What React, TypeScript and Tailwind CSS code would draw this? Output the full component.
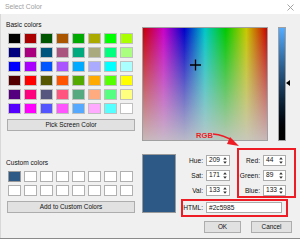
import React from "react";

// Qt basic colours, laid out column-major in a 6 x 8 grid
const basicColors: string[] = [];
for (let g = 0; g < 4; g++)
  for (let r = 0; r < 4; r++)
    for (let b = 0; b < 3; b++)
      basicColors.push(
        `rgb(${Math.floor((r * 255) / 3)},${Math.floor((g * 255) / 3)},${Math.floor((b * 255) / 2)})`
      );

const customColors = ["#2c5985", ...Array(15).fill("#ffffff")];

const Swatch = ({ color, border = "border-[#c0c0c0]" }: { color: string; border?: string }) => (
  <div className={`h-[11px] w-[13px] border ${border}`} style={{ backgroundColor: color }} />
);

const SpinBox = ({ value, width }: { value: string; width: string }) => (
  <div className={`flex h-[11px] items-center border border-[#acacac] bg-white ${width}`}>
    <span className="flex-1 pl-[2px] leading-none">{value}</span>
    <svg width="6" height="9" viewBox="0 0 6 9" className="mr-[1px]">
      <path d="M1.2 3.6 L3 1.2 L4.8 3.6 Z" fill="#333" />
      <path d="M1.2 5.4 L3 7.8 L4.8 5.4 Z" fill="#333" />
    </svg>
  </div>
);

const Button = ({ label, width }: { label: string; width: string }) => (
  <div
    className={`flex h-[12px] items-center justify-center border border-[#adadad] bg-[#e1e1e1] text-[6.4px] ${width}`}
  >
    {label}
  </div>
);

const Field = ({ label, value }: { label: string; value: string }) => (
  <>
    <span className="w-[28px] pr-[1px] text-right">{label}</span>
    <div className="ml-[2px]">
      <SpinBox value={value} width="w-[24px]" />
    </div>
  </>
);

const Spectrum = () => (
  <div className="h-[114px] w-[126px] border border-[#a0a0a0]">
    <svg width="124" height="112" className="block">
      <defs>
        <linearGradient id="hue" x1="0" x2="1" y1="0" y2="0">
          <stop offset="0" stopColor="#c80000" />
          <stop offset="0.1667" stopColor="#c800c8" />
          <stop offset="0.3333" stopColor="#0000c8" />
          <stop offset="0.5" stopColor="#00c8c8" />
          <stop offset="0.6667" stopColor="#00c800" />
          <stop offset="0.8333" stopColor="#c8c800" />
          <stop offset="1" stopColor="#c80000" />
        </linearGradient>
        <linearGradient id="sat" x1="0" x2="0" y1="0" y2="1">
          <stop offset="0" stopColor="#c8c8c8" stopOpacity="0" />
          <stop offset="1" stopColor="#c8c8c8" stopOpacity="0.92" />
        </linearGradient>
      </defs>
      <rect width="124" height="112" fill="url(#hue)" />
      <rect width="124" height="112" fill="url(#sat)" />
      <path d="M47 37 H58 M52.5 31.5 V42.5" stroke="#000" strokeWidth="1.3" />
    </svg>
  </div>
);

const App: React.FC = () => {
  return (
    <div className="relative h-[242px] w-[300px] overflow-hidden bg-[#f0f0f0] font-['Liberation_Sans',Arial,sans-serif] text-[6.6px] text-[#111]">
      {/* title bar */}
      <div className="flex h-[14px] items-center justify-between bg-white pl-[5px] pr-[6px]">
        <span className="text-[6.8px] text-[#a0a0a0]">Select Color</span>
        <svg width="7" height="7" viewBox="0 0 7 7">
          <path d="M0.5 0.5 L6.5 6.5 M6.5 0.5 L0.5 6.5" stroke="#9a9a9a" strokeWidth="0.9" />
        </svg>
      </div>

      <div className="flex h-[224px] border-l border-[#d8d8d8] pl-[5px] pt-[7px]">
        {/* left column */}
        <div className="flex w-[136px] flex-col">
          <span className="h-[8px] leading-[8px]">Basic colors</span>
          <div className="ml-[2px] mt-[4px] grid grid-flow-col grid-cols-[repeat(8,13px)] grid-rows-[repeat(6,11px)] gap-x-[3px] gap-y-[3px]">
            {basicColors.map((c, i) => (
              <Swatch key={i} color={c} />
            ))}
          </div>
          <div className="ml-[1px] mt-[5px]">
            <Button label="Pick Screen Color" width="w-[128px]" />
          </div>
          <span className="mt-[28px] h-[8px] leading-[8px]">Custom colors</span>
          <div className="ml-[2px] mt-[4px] grid grid-cols-[repeat(8,13px)] grid-rows-[repeat(2,11px)] gap-x-[3px] gap-y-[3px]">
            {customColors.map((c, i) => (
              <Swatch key={i} color={c} border={i === 0 ? "border-[#9a9a9a]" : "border-[#b0b0b0]"} />
            ))}
          </div>
          <div className="ml-[1px] mt-[5px]">
            <Button label="Add to Custom Colors" width="w-[128px]" />
          </div>
        </div>

        {/* right column */}
        <div className="flex flex-col pt-[6px]">
          <div className="flex">
            <Spectrum />
            <div className="relative ml-[10px] h-[114px] w-[8px] border border-[#a0a0a0] bg-linear-to-b from-[#54acff] to-black">
              <svg width="4" height="6" viewBox="0 0 4 6" className="absolute -right-[5px] top-[52px]">
                <path d="M0 3 L4 0 L4 6 Z" fill="#000" />
              </svg>
            </div>
          </div>

          <div className="mt-[13px] flex">
            <div className="h-[59px] w-[34px] border border-[#9a9a9a] bg-[#2c5985]" />
            <div className="flex flex-col pt-[1px]">
              <div className="flex flex-col gap-y-[4px]">
                <div className="flex h-[11px] items-center">
                  <Field label="Hue:" value="209" />
                  <span className="w-[31px] pr-[1px] text-right">Red:</span>
                  <div className="ml-[2px]">
                    <SpinBox value="44" width="w-[23px]" />
                  </div>
                </div>
                <div className="flex h-[11px] items-center">
                  <Field label="Sat:" value="171" />
                  <span className="w-[31px] pr-[1px] text-right">Green:</span>
                  <div className="ml-[2px]">
                    <SpinBox value="89" width="w-[23px]" />
                  </div>
                </div>
                <div className="flex h-[11px] items-center">
                  <Field label="Val:" value="133" />
                  <span className="w-[31px] pr-[1px] text-right">Blue:</span>
                  <div className="ml-[2px]">
                    <SpinBox value="133" width="w-[23px]" />
                  </div>
                </div>
              </div>
              <div className="mt-[6px] flex h-[11px] items-center">
                <span className="w-[28px] pr-[1px] text-right">HTML:</span>
                <div className="ml-[2px] flex h-[11px] w-[76px] items-center border border-[#acacac] bg-white pl-[2px]">
                  #2c5985
                </div>
              </div>
            </div>
          </div>

          <div className="ml-[62px] mt-[8px] flex gap-x-[10px]">
            <Button label="OK" width="w-[37px]" />
            <Button label="Cancel" width="w-[41px]" />
          </div>
        </div>
      </div>

      {/* bottom edge of the window underneath */}
      <div className="h-[4px] border-t border-[#8a8a8a] bg-white" />

      {/* annotations */}
      <div className="absolute left-[237px] top-[148px] h-[50px] w-[59px] border-2 border-[#ee1c25]" />
      <div className="absolute left-[181px] top-[199px] h-[18px] w-[107px] border-2 border-[#ee1c25]" />
      <span className="absolute left-[196px] top-[131px] text-[7.6px] font-bold leading-[9px] text-[#ee1c25]">RGB</span>
      <svg width="30" height="18" viewBox="0 0 30 18" className="absolute left-[212px] top-[131px]">
        <path d="M1 3 Q12 4 21 10" stroke="#ee1c25" strokeWidth="1.5" fill="none" />
        <path d="M18 6 L27 15 L15 13 Z" fill="#ee1c25" />
      </svg>
    </div>
  );
};

export default App;
